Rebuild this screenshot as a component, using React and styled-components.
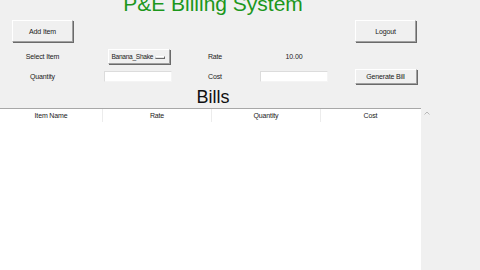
import React from "react";
import styled, { createGlobalStyle } from "styled-components";

const GlobalStyle = createGlobalStyle`
  html, body {
    margin: 0;
    padding: 0;
    background: #f0f0f0;
  }
  body {
    font-family: "Liberation Sans", Arial, sans-serif;
  }
`;

const Window = styled.div`
  width: 480px;
  height: 270px;
  overflow: hidden;
  background: #f0f0f0;
  display: flex;
  flex-direction: column;
`;

const Title = styled.h1`
  margin: -7px 0 0;
  width: 426px;
  height: 21px;
  font-size: 21px;
  line-height: 21px;
  font-weight: normal;
  color: #1c971c;
  text-align: center;
`;

const Row = styled.div`
  display: grid;
  grid-template-columns: 85px 105px 50px 108px 75px;
  align-items: center;
  justify-items: center;
  height: ${(p) => p.h}px;
  margin-top: ${(p) => p.top}px;
`;

const Label = styled.span`
  font-size: 7px;
  color: #1a1a1a;
  letter-spacing: -0.15px;
  white-space: nowrap;
`;

const Button = styled.button`
  width: ${(p) => p.w}px;
  height: ${(p) => p.h}px;
  padding: 0;
  box-sizing: border-box;
  background: #f0f0f0;
  border: 1px solid;
  border-color: #ffffff #a0a0a0 #a0a0a0 #ffffff;
  box-shadow: 1px 1px 0 #6a6a6a;
  font-family: inherit;
  font-size: 7px;
  color: #1a1a1a;
  letter-spacing: -0.15px;
`;

const OptionMenu = styled.div`
  width: 62px;
  height: 15px;
  box-sizing: border-box;
  margin-left: 2px;
  display: flex;
  align-items: center;
  justify-content: space-between;
  padding: 0 4px 0 3px;
  background: #f0f0f0;
  border: 1px solid;
  border-color: #ffffff #a0a0a0 #a0a0a0 #ffffff;
  box-shadow: 1px 1px 0 #6a6a6a;
  font-size: 6.6px;
  color: #1a1a1a;
  letter-spacing: -0.3px;
`;

const Indicator = styled.span`
  width: 8px;
  height: 1px;
  border: 1px solid;
  border-color: #ffffff #6a6a6a #6a6a6a #cfcfcf;
  background: #e4e4e4;
  margin-top: 1px;
`;

const Entry = styled.input`
  width: 68px;
  height: 11px;
  box-sizing: border-box;
  padding: 0;
  background: #ffffff;
  border: 1px solid;
  border-color: #dcdcdc #f4f4f4 #f4f4f4 #dcdcdc;
  outline: none;
`;

const Heading = styled.div`
  margin-top: 4px;
  width: 426px;
  font-size: 18px;
  line-height: 18px;
  color: #111;
  text-align: center;
`;

const TableArea = styled.div`
  margin-top: 2px;
  flex: 1;
  display: flex;
`;

const Table = styled.div`
  width: 421px;
  background: #ffffff;
  border-top: 1px solid #a8a8a8;
`;

const HeaderRow = styled.div`
  display: grid;
  grid-template-columns: 103px 109px 109px 100px;
  height: 13px;
`;

const HeaderCell = styled.div`
  display: flex;
  align-items: center;
  justify-content: center;
  font-size: 7px;
  color: #1a1a1a;
  letter-spacing: -0.15px;
  border-right: 1px solid ${(p) => (p.last ? "transparent" : "#ececec")};
`;

const Scrollbar = styled.div`
  width: 12px;
  display: flex;
  justify-content: center;
  padding-top: 3px;
`;

const columns = ["Item Name", "Rate", "Quantity", "Cost"];

export default function App() {
  return (
    <Window>
      <GlobalStyle />
      <Title>P&amp;E Billing System</Title>
      <Row h={22} top={6}>
        <Button w={61} h={22}>Add Item</Button>
        <span />
        <span />
        <span />
        <Button w={61} h={22}>Logout</Button>
      </Row>
      <Row h={15} top={7}>
        <Label>Select Item</Label>
        <OptionMenu>
          <span>Banana_Shake</span>
          <Indicator />
        </OptionMenu>
        <Label>Rate</Label>
        <Label>10.00</Label>
        <span />
      </Row>
      <Row h={15} top={5}>
        <Label>Quantity</Label>
        <Entry />
        <Label>Cost</Label>
        <Entry />
        <Button w={62} h={15}>Generate Bill</Button>
      </Row>
      <Heading>Bills</Heading>
      <TableArea>
        <Table>
          <HeaderRow>
            {columns.map((c, i) => (
              <HeaderCell key={c} last={i === columns.length - 1}>
                {c}
              </HeaderCell>
            ))}
          </HeaderRow>
        </Table>
        <Scrollbar>
          <svg width="6" height="4" viewBox="0 0 6 4">
            <path d="M0.5 3.5 L3 1 L5.5 3.5" fill="none" stroke="#b8b8b8" strokeWidth="1" />
          </svg>
        </Scrollbar>
      </TableArea>
    </Window>
  );
}
